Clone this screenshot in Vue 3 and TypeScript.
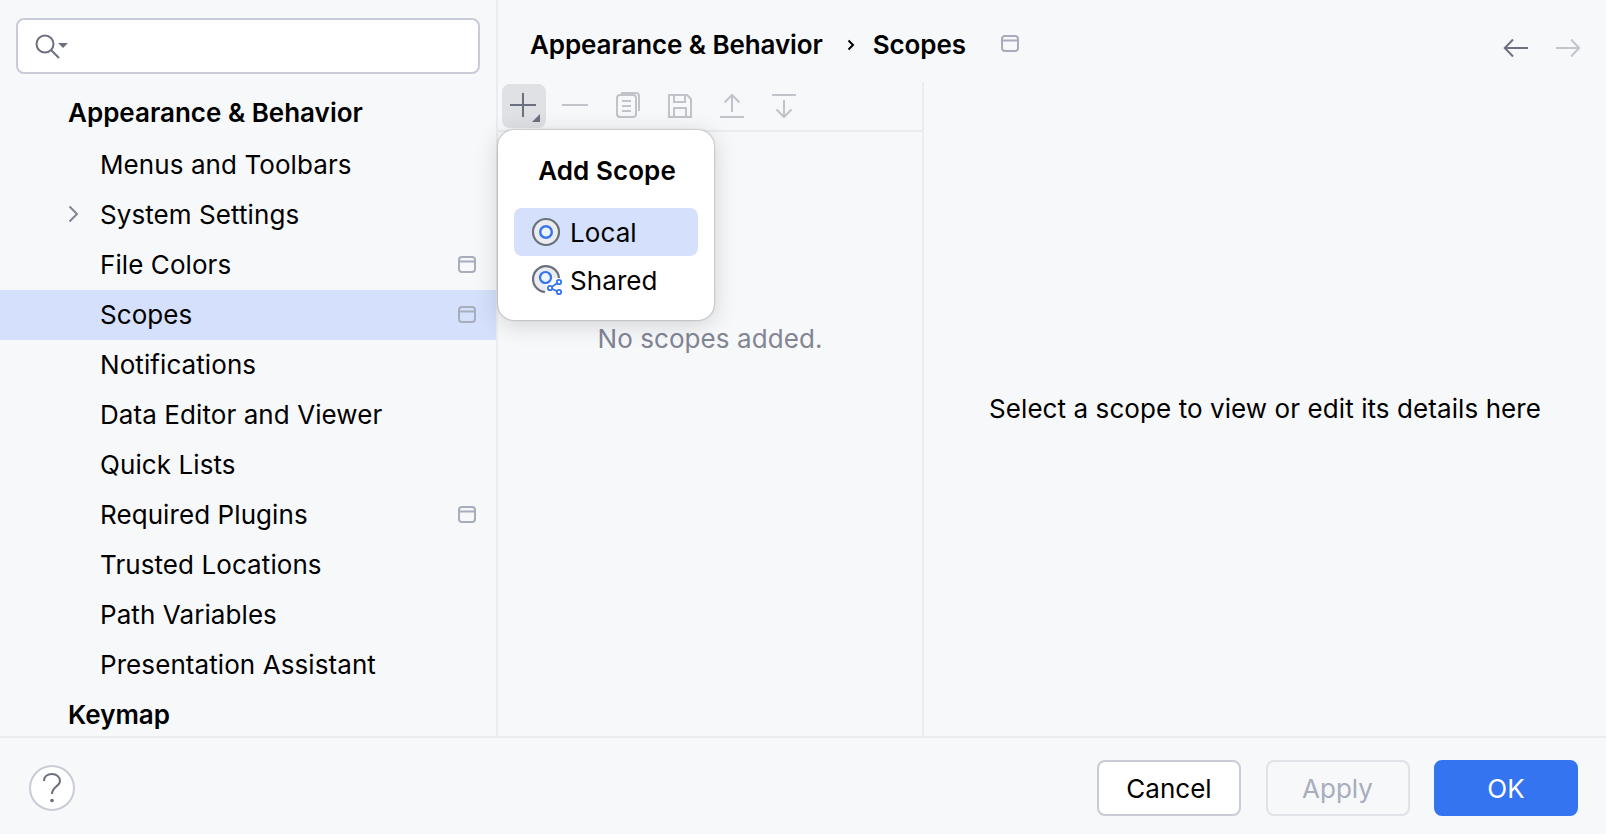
<template>
  <div class="dialog">
    <div class="body">
      <aside class="sidebar">
        <div class="search">
          <svg width="32" height="32" viewBox="0 0 32 32" fill="none">
            <circle cx="11" cy="14" r="8.500" stroke="#6c707e" stroke-width="2" />
            <path d="M17 20l8 8" stroke="#6c707e" stroke-width="2" />
            <path d="M24 13h10l-5 5z" fill="#6c707e" />
          </svg>
        </div>
        <ul class="tree">
          <li
            v-for="row in rows"
            :key="row.label"
            class="row"
            :class="{ head: row.head, selected: row.label === 'Scopes' }"
          >
            <svg v-if="row.arrow" class="chevron" width="12" height="18" viewBox="0 0 12 18" fill="none">
              <path d="M2.500 1.500l7.500 7.500-7.500 7.500" stroke="#818594" stroke-width="2" />
            </svg>
            <span class="label">{{ row.label }}</span>
            <svg v-if="row.badge" class="badge" width="18" height="17" viewBox="0 0 18 17" fill="none">
              <rect x="1" y="1" width="16" height="15" rx="3" stroke="#a8adbd" stroke-width="2" />
              <path d="M1 5.500h16" stroke="#a8adbd" stroke-width="2" />
            </svg>
          </li>
        </ul>
      </aside>

      <main class="content">
        <header class="crumbs">
          <span class="crumb">Appearance &amp; Behavior</span>
          <svg class="sep" width="8" height="12" viewBox="0 0 8 12" fill="none">
            <path d="M1.500 1.500l4.500 4.500-4.500 4.500" stroke="#000" stroke-width="2" />
          </svg>
          <span class="crumb">Scopes</span>
          <svg class="crumb-badge" width="18" height="17" viewBox="0 0 18 17" fill="none">
            <rect x="1" y="1" width="16" height="15" rx="3" stroke="#a8adbd" stroke-width="2" />
            <path d="M1 5.500h16" stroke="#a8adbd" stroke-width="2" />
          </svg>
          <span class="nav">
            <svg width="26" height="20" viewBox="0 0 26 20" fill="none">
              <path d="M25 10H2M10 1.500L1.800 10l8.200 8.500" stroke="#6c707e" stroke-width="2" />
            </svg>
            <svg width="26" height="20" viewBox="0 0 26 20" fill="none">
              <path d="M1 10h23M16 1.500l8.200 8.500-8.200 8.500" stroke="#c3c5cc" stroke-width="2" />
            </svg>
          </span>
        </header>

        <div class="panes">
          <section class="list-pane">
            <div class="toolbar">
              <button class="tool active">
                <svg width="44" height="44" viewBox="0 0 44 44" fill="none">
                  <path d="M8 21h26M21 9v24" stroke="#6c707e" stroke-width="2" />
                  <path d="M38 30v8h-8z" fill="#6c707e" />
                </svg>
              </button>
              <button class="tool">
                <svg width="44" height="44" viewBox="0 0 44 44" fill="none">
                  <path d="M8 21h26" stroke="#c1c3ca" stroke-width="2" />
                </svg>
              </button>
              <button class="tool">
                <svg width="44" height="44" viewBox="0 0 44 44" fill="none">
                  <rect x="11" y="11" width="19" height="22" rx="3" stroke="#c1c3ca" stroke-width="2" />
                  <path d="M15 9h15a3 3 0 0 1 3 3v15" stroke="#c1c3ca" stroke-width="2" />
                  <path d="M16 17h9M16 22h9M16 27h9" stroke="#c1c3ca" stroke-width="2" />
                </svg>
              </button>
              <button class="tool">
                <svg width="44" height="44" viewBox="0 0 44 44" fill="none">
                  <path d="M11 11h18l4 4v18H11z" stroke="#c1c3ca" stroke-width="2" />
                  <path d="M16 11v7h11v-7M16 33v-9h12v9" stroke="#c1c3ca" stroke-width="2" />
                </svg>
              </button>
              <button class="tool">
                <svg width="44" height="44" viewBox="0 0 44 44" fill="none">
                  <path d="M10 33h24M22 28V11M14.500 18.500L22 11l7.500 7.500" stroke="#c1c3ca" stroke-width="2" />
                </svg>
              </button>
              <button class="tool">
                <svg width="44" height="44" viewBox="0 0 44 44" fill="none">
                  <path d="M10 11h24M22 16v17M14.500 25.500L22 33l7.500-7.500" stroke="#c1c3ca" stroke-width="2" />
                </svg>
              </button>
            </div>
            <div class="empty">No scopes added.</div>

            <div class="popup">
              <div class="popup-title">Add Scope</div>
              <div class="popup-item current">
                <svg width="28" height="28" viewBox="0 0 28 28" fill="none">
                  <circle cx="14" cy="14" r="13" fill="#ebecf0" stroke="#6c707e" stroke-width="2.200" />
                  <circle cx="14" cy="14" r="5.800" fill="#edf3ff" stroke="#3574f0" stroke-width="2.400" />
                </svg>
                <span>Local</span>
              </div>
              <div class="popup-item">
                <svg class="shared" width="32" height="30" viewBox="0 0 32 30" fill="none">
                  <path d="M14 27A13 13 0 1 1 27 13L14 14z" fill="#ebecf0" />
                  <path d="M13 27A13 13 0 1 1 27 13" stroke="#6c707e" stroke-width="2.200" />
                  <circle cx="13.500" cy="12.500" r="5.500" fill="#edf3ff" stroke="#3574f0" stroke-width="2.200" />
                  <path d="M27 17l-9 6 9 4" stroke="#fff" stroke-width="6" stroke-linejoin="round" />
                  <path d="M27 17l-9 6 9 4" stroke="#3574f0" stroke-width="1.800" />
                  <circle cx="27" cy="17" r="2.200" fill="#fff" stroke="#3574f0" stroke-width="1.800" />
                  <circle cx="18" cy="23" r="2.200" fill="#fff" stroke="#3574f0" stroke-width="1.800" />
                  <circle cx="27" cy="27" r="2.200" fill="#fff" stroke="#3574f0" stroke-width="1.800" />
                </svg>
                <span>Shared</span>
              </div>
            </div>
          </section>
          <section class="detail-pane">Select a scope to view or edit its details here</section>
        </div>
      </main>
    </div>

    <footer class="footer">
      <button class="help">
        <svg width="20" height="32" viewBox="0 0 20 32" fill="none">
          <path d="M2 9c0-4.500 3.500-7 8-7s8 2.800 8 7c0 5-8 6-8 13" stroke="#6c707e" stroke-width="2" />
          <circle cx="10" cy="28.500" r="1.800" fill="#6c707e" />
        </svg>
      </button>
      <div class="actions">
        <button class="btn">Cancel</button>
        <button class="btn disabled">Apply</button>
        <button class="btn primary">OK</button>
      </div>
    </footer>
  </div>
</template>

<script setup lang="ts">
type Row = {
  label: string
  head?: boolean
  arrow?: boolean
  badge?: boolean
}

const rows: Row[] = [
  { label: 'Appearance & Behavior', head: true },
  { label: 'Menus and Toolbars' },
  { label: 'System Settings', arrow: true },
  { label: 'File Colors', badge: true },
  { label: 'Scopes', badge: true },
  { label: 'Notifications' },
  { label: 'Data Editor and Viewer' },
  { label: 'Quick Lists' },
  { label: 'Required Plugins', badge: true },
  { label: 'Trusted Locations' },
  { label: 'Path Variables' },
  { label: 'Presentation Assistant' },
  { label: 'Keymap', head: true },
]
</script>

<style scoped>
.dialog {
  width: 1606px;
  height: 834px;
  display: flex;
  flex-direction: column;
  background: #f7f8fa;
  color: #000;
  font-family: Inter, "Liberation Sans", sans-serif;
  font-size: 26px;
  font-optical-sizing: none;
  letter-spacing: 0.08px;
  overflow: hidden;
}

.body {
  flex: 1;
  min-height: 0;
  display: flex;
}

.sidebar {
  width: 496px;
  flex: none;
  border-right: 2px solid #ebecf0;
  overflow: hidden;
}

.search {
  height: 56px;
  margin: 18px 16px 0 16px;
  box-sizing: border-box;
  border: 2px solid #c9ccd6;
  border-radius: 8px;
  background: #fff;
  display: flex;
  align-items: center;
  padding-left: 16px;
}

.search svg {
  overflow: visible;
}

.tree {
  list-style: none;
  margin: 14px 0 0;
  padding: 0;
}

.row {
  position: relative;
  height: 50px;
  box-sizing: border-box;
  display: flex;
  align-items: center;
  padding: 0 20px 2px 100px;
}

.row.head {
  padding-left: 68px;
  font-weight: 600;
  letter-spacing: 0;
}

.row:first-child {
  margin-bottom: 2px;
}

.row.selected {
  background: #d5e1fc;
}

.chevron {
  position: absolute;
  left: 67px;
  top: 15px;
}

.label {
  flex: 1;
  white-space: nowrap;
}

.content {
  flex: 1;
  min-width: 0;
  display: flex;
  flex-direction: column;
}

.crumbs {
  height: 82px;
  flex: none;
  display: flex;
  align-items: center;
  padding: 7px 25px 0 32px;
  box-sizing: border-box;
  font-weight: 600;
  letter-spacing: -0.1px;
}

.crumb {
  white-space: nowrap;
}

.sep {
  margin: 0 18px 0 24px;
}

.crumb-badge {
  margin: -3px 0 0 35px;
}

.nav {
  margin-left: auto;
  display: flex;
  gap: 26px;
  margin-top: 6px;
}

.panes {
  flex: 1;
  min-height: 0;
  display: flex;
}

.list-pane {
  position: relative;
  width: 424px;
  flex: none;
  display: flex;
  flex-direction: column;
  border-right: 2px solid #ebecf0;
}

.toolbar {
  height: 50px;
  flex: none;
  display: flex;
  gap: 8px;
  padding: 2px 0 0 4px;
  box-sizing: border-box;
  border-bottom: 2px solid #ebecf0;
}

.tool {
  width: 44px;
  height: 44px;
  padding: 0;
  border: 0;
  border-radius: 8px;
  background: none;
}

.tool.active {
  background: #dfe1e5;
}

.empty {
  flex: 1;
  display: flex;
  justify-content: center;
  padding-top: 191px;
  color: #818594;
}

.popup {
  position: absolute;
  left: 0;
  top: 48px;
  width: 216px;
  height: 190px;
  box-sizing: border-box;
  padding: 0 16px;
  background: #fff;
  border-radius: 16px;
  box-shadow: 0 0 2px rgba(0, 0, 0, 0.45), 0 4px 24px rgba(0, 0, 0, 0.16);
}

.popup-title {
  height: 78px;
  box-sizing: border-box;
  padding: 2px 0 0 2px;
  display: flex;
  align-items: center;
  justify-content: center;
  font-weight: 600;
}

.popup-item {
  height: 48px;
  display: flex;
  align-items: center;
  gap: 10px;
  padding-left: 18px;
  border-radius: 8px;
}

.popup-item.current {
  background: #d5e1fc;
}

.popup-item svg {
  flex: none;
  overflow: visible;
}

.popup-item .shared {
  margin-right: -4px;
}

.detail-pane {
  flex: 1;
  display: flex;
  justify-content: center;
  padding-top: 311px;
  white-space: nowrap;
}

.footer {
  height: 98px;
  flex: none;
  box-sizing: border-box;
  border-top: 2px solid #ebecf0;
  display: flex;
  align-items: center;
  justify-content: space-between;
  padding: 4px 28px 0 29px;
}

.help {
  width: 46px;
  height: 46px;
  padding: 0;
  border: 2px solid #c9ccd6;
  border-radius: 50%;
  background: #fff;
  display: flex;
  align-items: center;
  justify-content: center;
}

.actions {
  display: flex;
  gap: 24.500px;
}

.btn {
  width: 144px;
  height: 56px;
  padding: 0;
  border: 2px solid #c9ccd6;
  border-radius: 8px;
  background: #fff;
  color: #000;
  font: inherit;
}

.btn.disabled {
  background: #f7f8fa;
  border-color: #e0e2e8;
  color: #a8adbd;
}

.btn.primary {
  background: #3574f0;
  border-color: #3574f0;
  color: #fff;
}
</style>

<style>
html,
body {
  margin: 0;
  background: #f7f8fa;
}
</style>
